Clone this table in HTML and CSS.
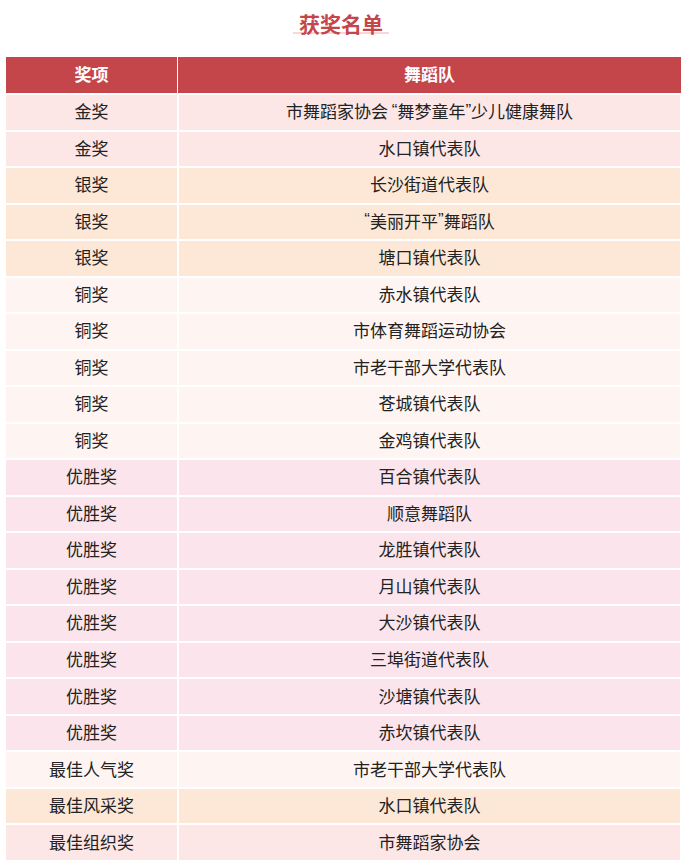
FILE: index.html
```html
<!DOCTYPE html>
<html lang="zh-CN">
<head>
<meta charset="utf-8">
<title>获奖名单</title>
<link rel="stylesheet" href="styles.css">
</head>
<body>
<div class="title-wrap"><span class="title">获奖名单</span></div>
<div class="table">
  <div class="row head"><div class="cell">奖项</div><div class="cell">舞蹈队</div></div>
  <div class="row gold"><div class="cell">金奖</div><div class="cell">市舞蹈家协会 <span class="q">“</span>舞梦童年<span class="q">”</span>少儿健康舞队</div></div>
  <div class="row gold"><div class="cell">金奖</div><div class="cell">水口镇代表队</div></div>
  <div class="row silver"><div class="cell">银奖</div><div class="cell">长沙街道代表队</div></div>
  <div class="row silver"><div class="cell">银奖</div><div class="cell"><span class="q">“</span>美丽开平<span class="q">”</span>舞蹈队</div></div>
  <div class="row silver"><div class="cell">银奖</div><div class="cell">塘口镇代表队</div></div>
  <div class="row bronze"><div class="cell">铜奖</div><div class="cell">赤水镇代表队</div></div>
  <div class="row bronze"><div class="cell">铜奖</div><div class="cell">市体育舞蹈运动协会</div></div>
  <div class="row bronze"><div class="cell">铜奖</div><div class="cell">市老干部大学代表队</div></div>
  <div class="row bronze"><div class="cell">铜奖</div><div class="cell">苍城镇代表队</div></div>
  <div class="row bronze"><div class="cell">铜奖</div><div class="cell">金鸡镇代表队</div></div>
  <div class="row merit"><div class="cell">优胜奖</div><div class="cell">百合镇代表队</div></div>
  <div class="row merit"><div class="cell">优胜奖</div><div class="cell">顺意舞蹈队</div></div>
  <div class="row merit"><div class="cell">优胜奖</div><div class="cell">龙胜镇代表队</div></div>
  <div class="row merit"><div class="cell">优胜奖</div><div class="cell">月山镇代表队</div></div>
  <div class="row merit"><div class="cell">优胜奖</div><div class="cell">大沙镇代表队</div></div>
  <div class="row merit"><div class="cell">优胜奖</div><div class="cell">三埠街道代表队</div></div>
  <div class="row merit"><div class="cell">优胜奖</div><div class="cell">沙塘镇代表队</div></div>
  <div class="row merit"><div class="cell">优胜奖</div><div class="cell">赤坎镇代表队</div></div>
  <div class="row bronze"><div class="cell">最佳人气奖</div><div class="cell">市老干部大学代表队</div></div>
  <div class="row silver"><div class="cell">最佳风采奖</div><div class="cell">水口镇代表队</div></div>
  <div class="row gold"><div class="cell">最佳组织奖</div><div class="cell">市舞蹈家协会</div></div>
</div>
</body>
</html>
```

FILE: styles.css
```css
html, body {
  margin: 0;
  padding: 0;
  background: #ffffff;
}
body {
  font-family: "Noto Sans CJK SC", "Noto Sans", sans-serif;
  color: #222222;
}
.title-wrap {
  box-sizing: border-box;
  height: 57px;
  padding-top: 9px;
  text-align: center;
  font-size: 21px;
  line-height: 28px;
}
.title {
  display: inline-block;
  padding: 0 6px;
  font-weight: bold;
  color: #c4454a;
  background: linear-gradient(#f8d6d9, #f8d6d9) no-repeat;
  background-size: 100% 2px;
  background-position: 0 23px;
}
.table {
  margin: 0 1px 0 6px;
  display: flex;
  flex-direction: column;
  gap: 2px;
}
.row {
  display: grid;
  grid-template-columns: 171px 1fr;
  gap: 2px;
  height: 34.52px;
  margin-right: 1px;
  font-size: 17px;
}
.row.head {
  height: 36px;
  gap: 1px;
  margin-right: 0;
  color: #ffffff;
  font-weight: bold;
}
.cell {
  display: flex;
  align-items: center;
  justify-content: center;
  white-space: pre;
  padding-bottom: 3px;
  box-sizing: border-box;
}
.q {
  font-family: "Liberation Sans", sans-serif;
}
.head .cell { background: #c4454a; }
.gold .cell { background: #fce6e6; }
.silver .cell { background: #fde8d8; }
.bronze .cell { background: #fef5f3; }
.merit .cell { background: #fbe4eb; }
```
